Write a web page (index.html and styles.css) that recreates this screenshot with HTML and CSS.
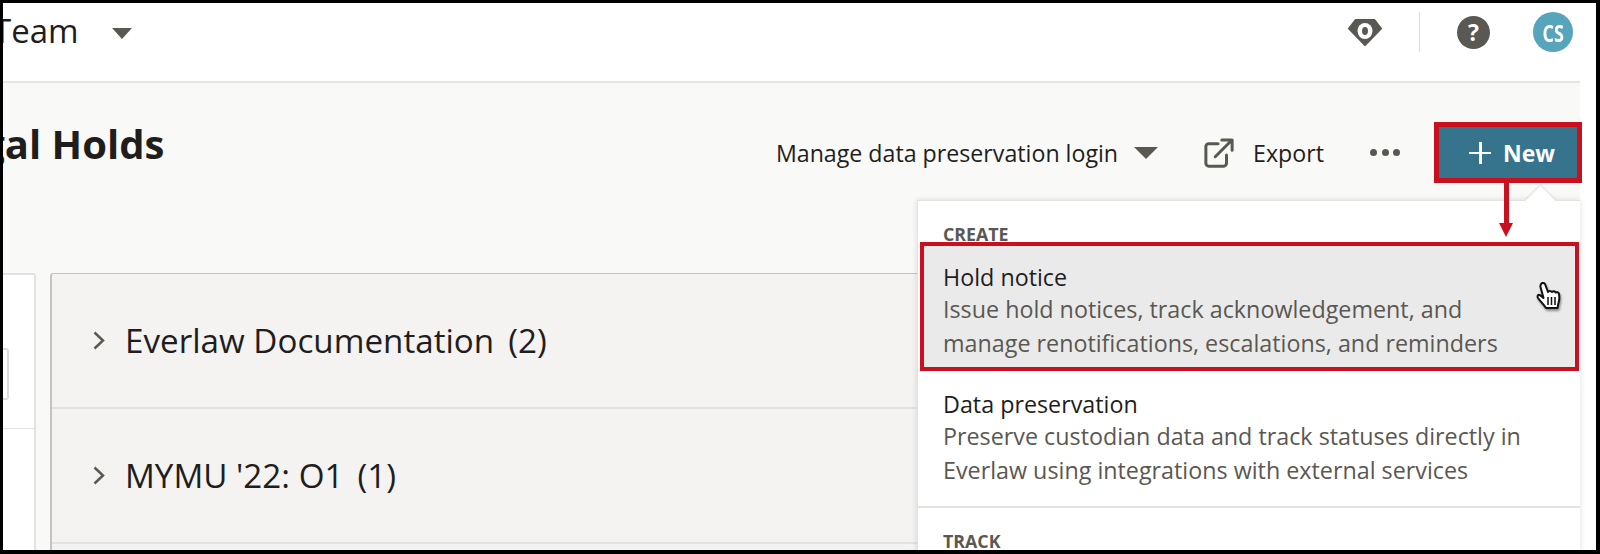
FILE: index.html
```html
<!DOCTYPE html>
<html lang="en">
<head>
    <meta charset="UTF-8">
    <title>Legal Holds</title>
    <link rel="stylesheet" href="styles.css">
</head>
<body>
    <div class="frame">
        <div class="topbar">
            <div class="org">
                <span class="org-name">Team</span>
                <span class="caret"></span>
            </div>
            <div class="top-icons">
                <svg class="gem" viewBox="0 0 34 27">
                    <path fill="#5a5852" stroke="#5a5852" stroke-width="2" stroke-linejoin="round" d="M7.500 1h19L33 9.500 17 26 1 9.500z"/>
                    <ellipse cx="17" cy="12" rx="7.500" ry="8" fill="#fff"/>
                    <ellipse cx="17" cy="12" rx="3" ry="4" fill="#5a5852"/>
                </svg>
                <span class="top-sep"></span>
                <span class="help">?</span>
                <span class="avatar"><span class="avatar-text">CS</span></span>
            </div>
        </div>
        <div class="page">
            <div class="page-head">
                <h1>Legal Holds</h1>
                <div class="actions">
                    <span class="action-login">Manage data preservation login</span>
                    <span class="caret caret-login"></span>
                    <svg class="export-icon" viewBox="0 0 32 32">
                        <path fill="none" stroke="#5a5852" stroke-width="3.200" stroke-linecap="round" stroke-linejoin="round" d="M15 6H5a3 3 0 0 0-3 3v18a3 3 0 0 0 3 3h16a3 3 0 0 0 3-3V18M12 20 29 3M19 2h11v11"/>
                    </svg>
                    <span class="action-export">Export</span>
                    <span class="dots"><i></i><i></i><i></i></span>
                    <button class="new-btn"><span class="plus"></span>New</button>
                </div>
            </div>
            <div class="content">
                <div class="side-card">
                    <div class="side-input"></div>
                    <div class="side-line"></div>
                </div>
                <div class="list-card">
                    <div class="list-row">
                        <svg class="chevron" viewBox="0 0 12 19"><path fill="none" stroke="#5a5852" stroke-width="2.500" d="M1.500 1.500 10 9.500l-8.500 8"/></svg>
                        <span>Everlaw Documentation</span><span class="count">(2)</span>
                    </div>
                    <div class="list-row">
                        <svg class="chevron" viewBox="0 0 12 19"><path fill="none" stroke="#5a5852" stroke-width="2.500" d="M1.500 1.500 10 9.500l-8.500 8"/></svg>
                        <span>MYMU '22: O1</span><span class="count">(1)</span>
                    </div>
                    <div class="list-row"></div>
                </div>
            </div>
        </div>

        <div class="menu">
            <span class="menu-tip"></span>
            <div class="menu-label">CREATE</div>
            <div class="menu-item active">
                <div class="item-title">Hold notice</div>
                <div class="item-desc">Issue hold notices, track acknowledgement, and<br>manage renotifications, escalations, and reminders</div>
            </div>
            <div class="menu-item">
                <div class="item-title">Data preservation</div>
                <div class="item-desc">Preserve custodian data and track statuses directly in<br>Everlaw using integrations with external services</div>
            </div>
            <div class="menu-line"></div>
            <div class="menu-label">TRACK</div>
        </div>

        <!-- annotation arrow and cursor sit on top of the screenshot -->
        <div class="arrow"></div>
        <svg class="hand" viewBox="0 0 26 28">
            <path fill="#fff" stroke="#111" stroke-width="2" stroke-linejoin="round" d="M5 2c1-1.500 3-1.500 4 0l3 8c.5-1.500 3-1.500 4 0 1-1 3-1 3.500.5 1-.5 3-.5 3.500 1.500.5 3 .5 6-.5 9l-1 5H10C8 23 5 20 2 16c-1-2 0-3.500 1.500-3 1.500.5 3 2 4 3L4.500 5c-.3-1 0-2 .5-3z"/>
            <path fill="none" stroke="#111" stroke-width="1.500" d="M12 15v8M15.500 15v8M19 15v8"/>
        </svg>
    </div>
</body>
</html>
```

FILE: styles.css
```css
* {
    box-sizing: border-box;
}

html, body {
    margin: 0;
    padding: 0;
}

body {
    font-family: "Open Sans", "Noto Sans", sans-serif;
    color: #1f1e1c;
    background: #fff;
}

.frame {
    position: relative;
    width: 1600px;
    height: 554px;
    overflow: hidden;
    border: solid #000;
    border-width: 3px 4px 4px 3px;
    background: #fff;
}

/* Top bar */
.topbar {
    display: flex;
    align-items: center;
    justify-content: space-between;
    height: 80px;
    padding-right: 7px;
    border-bottom: 2px solid #e6e5e2;
    margin-right: 16px;
}

.org {
    display: flex;
    align-items: center;
    margin-left: -10px;
    margin-top: -24px;
}

.org-name {
    font-size: 33px;
}

.caret {
    display: block;
    width: 0;
    height: 0;
    margin-left: 33px;
    margin-top: 6px;
    border-left: 10px solid transparent;
    border-right: 10px solid transparent;
    border-top: 11px solid #5a5852;
}

.top-icons {
    display: flex;
    align-items: center;
    margin-top: -20px;
}

.gem {
    width: 34px;
    height: 27px;
}

.top-sep {
    width: 1px;
    height: 40px;
    margin: 0 37px 0 37px;
    background: #e0dfdc;
}

.help {
    width: 33px;
    height: 33px;
    border-radius: 50%;
    background: #5a5852;
    color: #fff;
    font-size: 23px;
    font-weight: 700;
    line-height: 33px;
    text-align: center;
}

.avatar {
    display: flex;
    align-items: center;
    justify-content: center;
    width: 40px;
    height: 40px;
    margin-left: 43px;
    border-radius: 50%;
    background: #56a5bd;
    color: #fff;
    font-size: 24px;
    font-weight: 700;
}

.avatar-text {
    transform: scaleX(0.75);
}

/* Page */
.page {
    height: 470px;
    margin-right: 16px;
    background: #f9f9f7;
}

.page-head {
    display: flex;
    justify-content: space-between;
    height: 190px;
}

h1 {
    margin: 34px 0 0 -67px;
    font-size: 40px;
    font-weight: 700;
    line-height: 54px;
}

.actions {
    display: flex;
    align-items: flex-start;
    height: 61px;
    margin-top: 39px;
    font-size: 23.200px;
}

.action-login {
    margin-top: 15px;
}

.caret-login {
    margin: 25px 0 0 16px;
    border-left-width: 12px;
    border-right-width: 12px;
    border-top-width: 12px;
}

.export-icon {
    width: 30px;
    height: 30px;
    margin: 16px 0 0 46px;
}

.action-export {
    margin: 15px 0 0 19px;
}

.dots {
    display: flex;
    gap: 4.500px;
    margin: 27px 0 0 46px;
}

.dots i {
    width: 7px;
    height: 7px;
    border-radius: 50%;
    background: #5a5852;
}

.new-btn {
    display: flex;
    align-items: center;
    justify-content: center;
    width: 148px;
    height: 61px;
    margin: 0 -2px 0 34px;
    padding: 0 0 0 8px;
    border: 5px solid #c8101e;
    background: #35748c;
    color: #fff;
    font-family: inherit;
    font-size: 23px;
    font-weight: 700;
}

.plus {
    position: relative;
    width: 22px;
    height: 22px;
    margin-right: 12px;
}

.plus::before, .plus::after {
    content: "";
    position: absolute;
    background: #fff;
}

.plus::before {
    left: 10px;
    top: 0;
    width: 2.500px;
    height: 22px;
}

.plus::after {
    left: 0;
    top: 10px;
    width: 22px;
    height: 2.500px;
}

/* Cards under the header */
.content {
    display: flex;
    gap: 14px;
}

.side-card {
    width: 33px;
    height: 282px;
    background: #fff;
    border: solid #e3e2df;
    border-width: 2px 2px 0 0;
    border-top-right-radius: 3px;
    padding-top: 73px;
}

.side-input {
    width: 6px;
    height: 52px;
    border: 2px solid #dcdbd8;
    border-left: 0;
    border-radius: 0 3px 3px 0;
}

.side-line {
    height: 1px;
    margin-top: 28px;
    background: #e3e2df;
}

.list-card {
    flex: 1;
    border: solid #c4c3c0;
    border-width: 1px 0 0 2px;
    border-top-left-radius: 3px;
    background: #f4f3f2;
}

.list-row {
    display: flex;
    align-items: center;
    height: 135px;
    padding-left: 41px;
    border-bottom: 2px solid #e3e2df;
    font-size: 33.200px;
}

.chevron {
    width: 12px;
    height: 19px;
    margin-right: 20px;
}

.count {
    margin-left: 14px;
}

/* Dropdown menu */
.menu {
    position: absolute;
    left: 914px;
    top: 197px;
    width: 663px;
    height: 360px;
    background: #fff;
    border-top: 1px solid #e3e2df;
    border-left: 1px solid #e3e2df;
    box-shadow: 0 0 6px rgba(0, 0, 0, 0.12);
}

.menu-tip {
    position: absolute;
    left: 612px;
    top: -11px;
    width: 21px;
    height: 21px;
    background: #fff;
    transform: rotate(45deg);
    box-shadow: -1px -1px 2px rgba(0, 0, 0, 0.1);
}

.menu-label {
    position: relative;
    height: 41px;
    padding: 25px 0 0 25px;
    font-size: 17.800px;
    font-weight: 700;
    line-height: 17px;
    color: #5a5852;
}

.menu-item {
    height: 135px;
    padding: 17px 25px 0 25px;
}

.menu-item.active {
    height: 129px;
    margin: 0 1px 0 2px;
    padding: 15px 25px 0 19px;
    border: 4px solid #c8101e;
    background: #eaeaea;
}

.item-title {
    font-size: 23.300px;
    line-height: 32px;
    color: #1f1e1c;
}

.item-desc {
    font-size: 23.300px;
    line-height: 33.500px;
    color: #5a5852;
}

.menu-line {
    height: 2px;
    background: #e3e2df;
}

/* Annotations */
.arrow {
    position: absolute;
    left: 1501px;
    top: 180px;
    width: 5px;
    height: 40px;
    background: #c8101e;
}

.arrow::after {
    content: "";
    position: absolute;
    left: -5px;
    top: 40px;
    width: 0;
    height: 0;
    border-left: 7.500px solid transparent;
    border-right: 7.500px solid transparent;
    border-top: 14px solid #c8101e;
}

.hand {
    position: absolute;
    left: 1533px;
    top: 279px;
    width: 26px;
    height: 28px;
    filter: drop-shadow(1px 2px 1px rgba(0, 0, 0, 0.4));
}
```
